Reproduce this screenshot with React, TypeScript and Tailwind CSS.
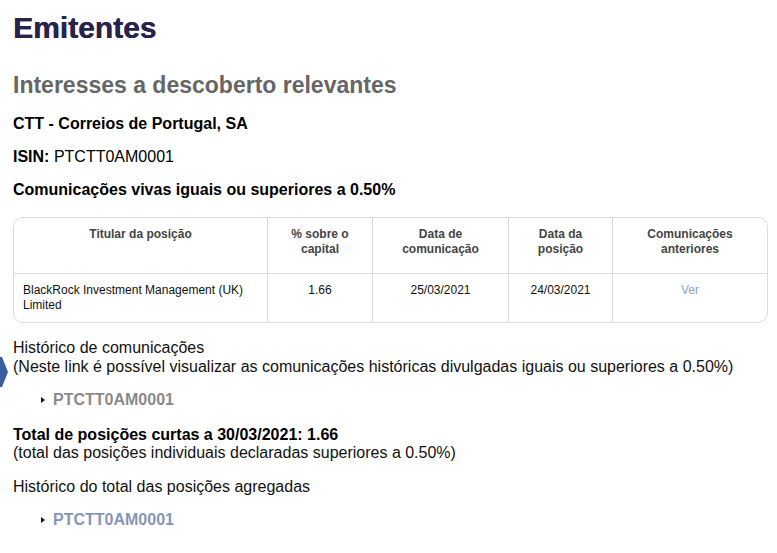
export default function App() {
  const cols = [
    { w: "w-[254px]", head: ["Titular da posição"] },
    { w: "w-[105px]", head: ["% sobre o", "capital"] },
    { w: "w-[136px]", head: ["Data de", "comunicação"] },
    { w: "w-[104px]", head: ["Data da", "posição"] },
    { w: "flex-1", head: ["Comunicações", "anteriores"] },
  ];

  const Marker = () => (
    <svg width="4" height="6" viewBox="0 0 4 6" className="mr-[8px] ml-[28px]">
      <path d="M0 0L4 3L0 6Z" fill="#111" />
    </svg>
  );

  return (
    <div className="relative min-h-[553px] bg-white pl-[13px] pr-[9px] pt-[11px] text-black font-['Liberation_Sans',Arial,sans-serif]">
      {/* carousel arrow peeking from the left edge */}
      <svg width="8" height="30" viewBox="0 0 8 30" className="absolute left-0 top-[357px]">
        <path d="M0 0L2 0L8 15L2 30L0 30Z" fill="#3d5b9f" />
      </svg>

      <h1 className="text-[30px] leading-[34px] font-bold text-[#28234d] [text-shadow:0.4px_0_0_#28234d]">Emitentes</h1>
      <h2 className="mt-[27px] text-[23px] leading-[26px] font-bold text-[#666]">
        Interesses a descoberto relevantes
      </h2>
      <p className="mt-[16px] text-[16px] leading-[20px] font-bold">CTT - Correios de Portugal, SA</p>
      <p className="mt-[13px] text-[16px] leading-[20px]">
        <span className="font-bold">ISIN:</span> PTCTT0AM0001
      </p>
      <p className="mt-[13px] text-[16px] leading-[20px] font-bold">
        Comunicações vivas iguais ou superiores a 0.50%
      </p>

      <div className="mt-[17px] rounded-[10px] border border-[#dcdcdc] text-[12px] leading-[15px]">
        <div className="flex h-[56px] border-b border-[#dcdcdc]">
          {cols.map((c, i) => (
            <div
              key={i}
              className={`${c.w} ${i < 4 ? "border-r border-[#dcdcdc]" : ""} pt-[9px] text-center font-bold text-[#444]`}
            >
              {c.head.map((h) => (
                <div key={h}>{h}</div>
              ))}
            </div>
          ))}
        </div>
        <div className="flex h-[48px] text-[#111]">
          <div className="w-[254px] border-r border-[#dcdcdc] pl-[9px] pr-[6px] pt-[9px]">
            BlackRock Investment Management (UK) Limited
          </div>
          <div className="w-[105px] border-r border-[#dcdcdc] pt-[9px] text-center">1.66</div>
          <div className="w-[136px] border-r border-[#dcdcdc] pt-[9px] text-center">25/03/2021</div>
          <div className="w-[104px] border-r border-[#dcdcdc] pt-[9px] text-center">24/03/2021</div>
          <div className="flex-1 pt-[9px] text-center text-[#8ba0c6]">Ver</div>
        </div>
      </div>

      <div className="mt-[15px] text-[16px] leading-[19px] text-[#111]">
        <p>Histórico de comunicações</p>
        <p>(Neste link é possível visualizar as comunicações históricas divulgadas iguais ou superiores a 0.50%)</p>
      </div>
      <div className="mt-[14px] flex items-center text-[16px] leading-[19px]">
        <Marker />
        <span className="font-bold text-[#8a8a8a]">PTCTT0AM0001</span>
      </div>

      <div className="mt-[17px] text-[16px] leading-[18px] text-[#111]">
        <p className="font-bold text-black">Total de posições curtas a 30/03/2021: 1.66</p>
        <p>(total das posições individuais declaradas superiores a 0.50%)</p>
      </div>
      <p className="mt-[15px] text-[16px] leading-[19px] text-[#111]">Histórico do total das posições agregadas</p>
      <div className="mt-[14px] flex items-center text-[16px] leading-[19px]">
        <Marker />
        <span className="font-bold text-[#8596b6]">PTCTT0AM0001</span>
      </div>
    </div>
  );
}
